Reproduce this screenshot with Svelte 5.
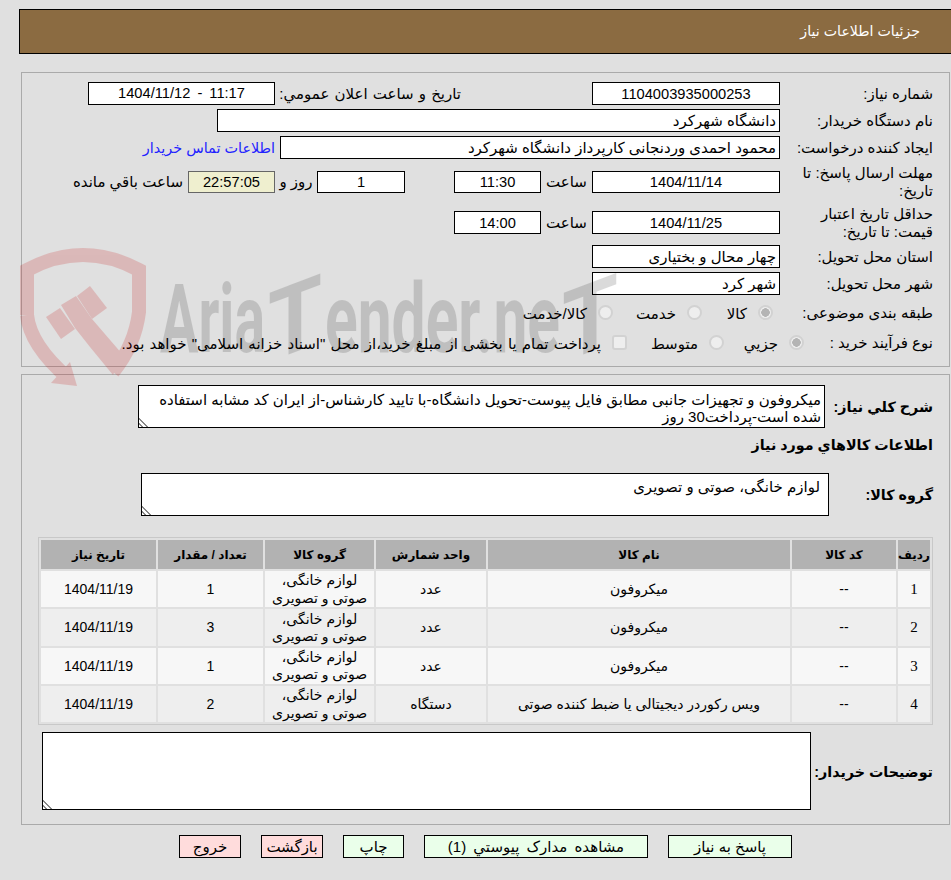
<script>
    const rows = [
        { id: 1, name: "میکروفون", unit: "عدد", qty: 1 },
        { id: 2, name: "میکروفون", unit: "عدد", qty: 3 },
        { id: 3, name: "میکروفون", unit: "عدد", qty: 1 },
        { id: 4, name: "ویس رکوردر دیجیتالی یا ضبط کننده صوتی", unit: "دستگاه", qty: 2 },
    ];

    const summary = "میکروفون و تجهیزات جانبی مطابق فایل پیوست-تحویل دانشگاه-با تایید کارشناس-از ایران کد مشابه استفاده شده است-پرداخت30 روز";
    const groupName = "لوازم خانگی، صوتی و تصویری";
</script>

<div class="page" dir="rtl">
    <header class="title">جزئیات اطلاعات نیاز</header>

    <section class="panel top">
        <div class="row">
            <span class="label">شماره نیاز:</span>
            <input class="w188 n" readonly value="1104003935000253" />
            <span class="pub-label">تاریخ و ساعت اعلان عمومي:</span>
            <div class="box w187 n" dir="ltr">1404/11/12 - 11:17</div>
        </div>
        <div class="row">
            <span class="label">نام دستگاه خریدار:</span>
            <input class="w563 start" readonly value="دانشگاه شهرکرد" />
        </div>
        <div class="row">
            <span class="label">ایجاد کننده درخواست:</span>
            <input class="w500 start" readonly value="محمود احمدی وردنجانی کارپرداز دانشگاه شهرکرد" />
            <a class="contact" href="#contact">اطلاعات تماس خریدار</a>
        </div>
        <div class="row tall">
            <span class="label">مهلت ارسال پاسخ: تا<br />تاریخ:</span>
            <input class="w188 short n" readonly value="1404/11/14" />
            <span class="hour">ساعت</span>
            <input class="w87 short n" readonly value="11:30" />
            <input class="w88 short days n" readonly value="1" />
            <span class="and">روز و</span>
            <div class="timer n">22:57:05</div>
            <span class="left">ساعت باقي مانده</span>
        </div>
        <div class="row tall">
            <span class="label">حداقل تاریخ اعتبار<br />قیمت: تا تاریخ:</span>
            <input class="w188 n" readonly value="1404/11/25" />
            <span class="hour">ساعت</span>
            <input class="w87 n" readonly value="14:00" />
        </div>
        <div class="row">
            <span class="label">استان محل تحویل:</span>
            <input class="w188 start" readonly value="چهار محال و بختیاری" />
        </div>
        <div class="row">
            <span class="label">شهر محل تحویل:</span>
            <input class="w188 start" readonly value="شهر کرد" />
        </div>
        <div class="row radios first">
            <span class="label">طبقه بندی موضوعی:</span>
            <label class="kala"><input type="radio" name="cat" checked disabled />کالا</label>
            <label class="service"><input type="radio" name="cat" disabled />خدمت</label>
            <label><input type="radio" name="cat" disabled />کالا/خدمت</label>
        </div>
        <div class="row radios second">
            <span class="label">نوع فرآیند خرید :</span>
            <label class="minor"><input type="radio" name="proc" checked disabled />جزیي</label>
            <label class="medium"><input type="radio" name="proc" disabled />متوسط</label>
            <label class="treasury"><input type="checkbox" disabled />پرداخت تمام یا بخشی از مبلغ خرید،از محل "اسناد خزانه اسلامی" خواهد بود.</label>
        </div>
    </section>

    <section class="panel bottom">
        <div class="field summary">
            <b>شرح کلي نیاز:</b>
            <textarea readonly value={summary}></textarea>
        </div>
        <h3>اطلاعات کالاهاي مورد نیاز</h3>
        <div class="field group">
            <b>گروه کالا:</b>
            <textarea readonly value={groupName}></textarea>
        </div>

        <table>
            <colgroup>
                <col style="width:32px" />
                <col style="width:104px" />
                <col style="width:302px" />
                <col style="width:110px" />
                <col style="width:109px" />
                <col style="width:105px" />
                <col style="width:115px" />
            </colgroup>
            <thead>
                <tr>
                    <th>ردیف</th>
                    <th>کد کالا</th>
                    <th>نام کالا</th>
                    <th>واحد شمارش</th>
                    <th>گروه کالا</th>
                    <th>تعداد / مقدار</th>
                    <th>تاریخ نیاز</th>
                </tr>
            </thead>
            <tbody>
                {#each rows as row}
                    <tr>
                        <td class="num">{row.id}</td>
                        <td>--</td>
                        <td>{row.name}</td>
                        <td>{row.unit}</td>
                        <td>لوازم خانگی،<br />صوتی و تصویری</td>
                        <td>{row.qty}</td>
                        <td>1404/11/19</td>
                    </tr>
                {/each}
            </tbody>
        </table>

        <div class="field notes">
            <b>توضیحات خریدار:</b>
            <textarea readonly></textarea>
        </div>
    </section>

    <div class="actions">
        <button class="go reply">پاسخ به نیاز</button>
        <button class="go docs">مشاهده مدارک پیوستي (1)</button>
        <button class="go print">چاپ</button>
        <button class="stop">بازگشت</button>
        <button class="stop">خروج</button>
    </div>

    <!-- watermark sits over the form, see-through -->
    <svg class="mark" width="640" height="150" viewBox="0 0 640 150" aria-hidden="true">
        <g class="pink" transform="translate(0,-245)">
            <path class="shield" d="M27 315 L27 270 Q83 240 139 270 L139 312 Q135 345 113 372" />
            <path class="shield" d="M27 315 Q30 345 68 378" />
            <polygon points="51,383 77,386 70,362" />
            <polygon points="46,317 60,308 75,329 61,339" />
            <polygon points="61,305 76,296 92,319 123,355 113,375 90,347 75,328" />
            <polygon points="77,296 90,286 107,308 92,319" />
        </g>
        <g class="word">
            <text x="160" y="107" textLength="105" lengthAdjust="spacingAndGlyphs">Aria</text>
            <text transform="translate(295,107) skewY(-20.7)" x="-27" y="0" textLength="54" lengthAdjust="spacingAndGlyphs">T</text>
            <text x="325" y="107" textLength="235" lengthAdjust="spacingAndGlyphs">ender.ne</text>
            <text transform="translate(590,107) skewY(-20.7)" x="-28" y="0" textLength="56" lengthAdjust="spacingAndGlyphs">T</text>
        </g>
    </svg>
</div>

<style>
    :global(body) {
        background: #e0e0e0;
    }

    .page {
        position: relative;
        height: 880px;
        overflow: hidden;
        font-family: "Liberation Sans", "DejaVu Sans", sans-serif;
        font-size: 15px;
        color: #000;
    }

    .mark {
        position: absolute;
        left: 0;
        top: 245px;
        direction: ltr;
        pointer-events: none;
    }
    .word {
        opacity: 0.14;
    }
    .word text {
        font-family: Roboto, sans-serif;
        font-weight: 700;
        font-size: 97px;
        fill: #000;
    }
    .pink {
        opacity: 0.174;
        fill: #c30000;
    }
    .shield {
        fill: none;
        stroke: #c30000;
        stroke-width: 14;
    }

    .title {
        box-sizing: border-box;
        height: 45px;
        margin: 9px 0 0 19px;
        border: 1px solid #000;
        border-right: none;
        background: #8b6b41;
        color: #fff;
        font-size: 14.2px;
        line-height: 43px;
        padding-right: 31px;
    }

    .panel {
        box-sizing: border-box;
        width: 929px;
        margin-right: 1px;
        border: 1px solid #aaa;
    }
    .top {
        height: 295px;
        margin-top: 18px;
        padding: 9px 16px 0 0;
    }
    .bottom {
        height: 451px;
        margin-top: 7px;
        padding: 10px 16px 0 0;
    }

    .row {
        display: flex;
        align-items: center;
        height: 23px;
        margin-bottom: 4px;
    }
    .tall {
        height: 37px;
    }
    .label {
        flex: none;
        width: 153px;
        line-height: 18px;
    }
    .n {
        font-size: 14.67px;
    }

    input:not([type]) {
        box-sizing: border-box;
        height: 23px;
        margin: 0;
        padding: 0 8px;
        border: 1px solid #000;
        border-radius: 0;
        outline: none;
        background: #fff;
        color: #000;
        font-family: inherit;
        text-align: center;
    }
    input.short {
        height: 22px;
    }
    input.start {
        font-size: 15px;
        text-align: right;
        padding: 0 3px;
    }
    .w188 {
        width: 188px;
    }
    .w87 {
        width: 87px;
    }
    .w88 {
        width: 88px;
    }
    .w563 {
        width: 563px;
    }
    .w500 {
        width: 500px;
    }

    .box {
        box-sizing: border-box;
        height: 23px;
        border: 1px solid #000;
        background: #fff;
        line-height: 21px;
        text-align: center;
        word-spacing: 3px;
    }
    .w187 {
        width: 187px;
    }
    .pub-label {
        width: 186px;
        margin-right: 131px;
        white-space: nowrap;
        word-spacing: 1px;
    }
    .contact {
        margin-right: 5px;
        color: #22f;
        font-size: 14.4px;
        text-decoration: none;
    }
    .hour {
        width: 51px;
        text-align: center;
    }
    input.days {
        margin-right: 49px;
    }
    .and {
        width: 42px;
        text-align: center;
        white-space: nowrap;
    }
    .timer {
        box-sizing: border-box;
        width: 87px;
        height: 22px;
        border: 1px solid #666;
        background: #efefcf;
        line-height: 20px;
        text-align: center;
    }
    .left {
        margin-right: 5px;
        white-space: nowrap;
    }

    .radios label {
        display: flex;
        align-items: center;
        padding-top: 2px;
        white-space: nowrap;
    }
    .radios input {
        appearance: none;
        box-sizing: border-box;
        flex: none;
        width: 15px;
        height: 15px;
        margin: -3px 0 0 11px;
        border: 2px solid #d2d2d2;
        border-radius: 50%;
        background: #eee;
    }
    .radios input:checked {
        background: radial-gradient(circle, #b4b4b4 0 4px, #eee 4.5px);
    }
    .radios input[type="checkbox"] {
        border-radius: 3px;
    }
    .treasury {
        word-spacing: 1px;
    }
    .first {
        height: 28px;
        margin-bottom: 2px;
    }
    .second {
        height: 28px;
        margin-bottom: 0;
    }
    .first .kala {
        margin-right: 7px;
        width: 71px;
    }
    .first .service {
        width: 89px;
    }
    .second .minor {
        margin-right: -24px;
        width: 80px;
    }
    .second .medium {
        width: 97px;
    }

    .field {
        display: flex;
        align-items: center;
    }
    .field b {
        flex: none;
        font-size: 14.3px;
        white-space: nowrap;
    }
    textarea {
        box-sizing: border-box;
        margin: 0;
        padding: 1px 4px;
        border: 1px solid #000;
        border-radius: 0;
        outline: none;
        background: #fff;
        color: #000;
        font: inherit;
        overflow: hidden;
    }
    textarea::-webkit-resizer {
        background: linear-gradient(45deg, transparent 0 2px, #888 2px 3.2px, transparent 3.2px 5.5px, #888 5.5px 6.7px, transparent 6.7px);
    }
    .summary {
        height: 43px;
    }
    .summary b {
        width: 108px;
    }
    .summary textarea {
        width: 687px;
        height: 43px;
        padding: 5px 3px 0;
        line-height: 17px;
    }
    h3 {
        margin: 8px 0 0;
        height: 34px;
        font-size: 14.3px;
        line-height: 18px;
    }
    .group {
        height: 43px;
        margin-top: 3px;
    }
    .group b {
        width: 104px;
    }
    .group textarea {
        width: 688px;
        height: 43px;
        padding: 4px 8px;
    }

    table {
        width: 895px;
        margin: 21px 0 0 0;
        table-layout: fixed;
        border-collapse: separate;
        border-spacing: 2px;
        border: 1px solid #c8c8c8;
        font-size: 14px;
    }
    th {
        height: 29px;
        padding: 0;
        background: #b2b2b2;
        font-size: 12px;
        font-weight: 700;
        text-align: center;
    }
    td {
        height: 35.35px;
        padding: 1px 0 0;
        line-height: 17.5px;
        text-align: center;
    }
    tbody tr:nth-child(odd) td {
        background: #f7f7f7;
    }
    tbody tr:nth-child(even) td {
        background: #eee;
    }
    .num {
        font-family: "Liberation Serif", serif;
        font-size: 15px;
    }

    .notes {
        margin-top: 7px;
        height: 78px;
    }
    .notes b {
        width: 122px;
        padding-top: 2px;
    }
    .notes textarea {
        width: 769px;
        height: 78px;
    }

    .actions {
        display: flex;
        gap: 20px;
        margin: 10px 159px 0 0;
    }
    button {
        box-sizing: border-box;
        height: 23px;
        padding: 0;
        border: 1px solid #000;
        font: inherit;
        color: #000;
    }
    .go {
        background: #eaffea;
    }
    .stop {
        width: 62px;
        background: #ffdcdc;
    }
    .reply {
        width: 124px;
    }
    .docs {
        width: 224px;
        word-spacing: 3px;
    }
    .print {
        width: 61px;
    }
</style>
